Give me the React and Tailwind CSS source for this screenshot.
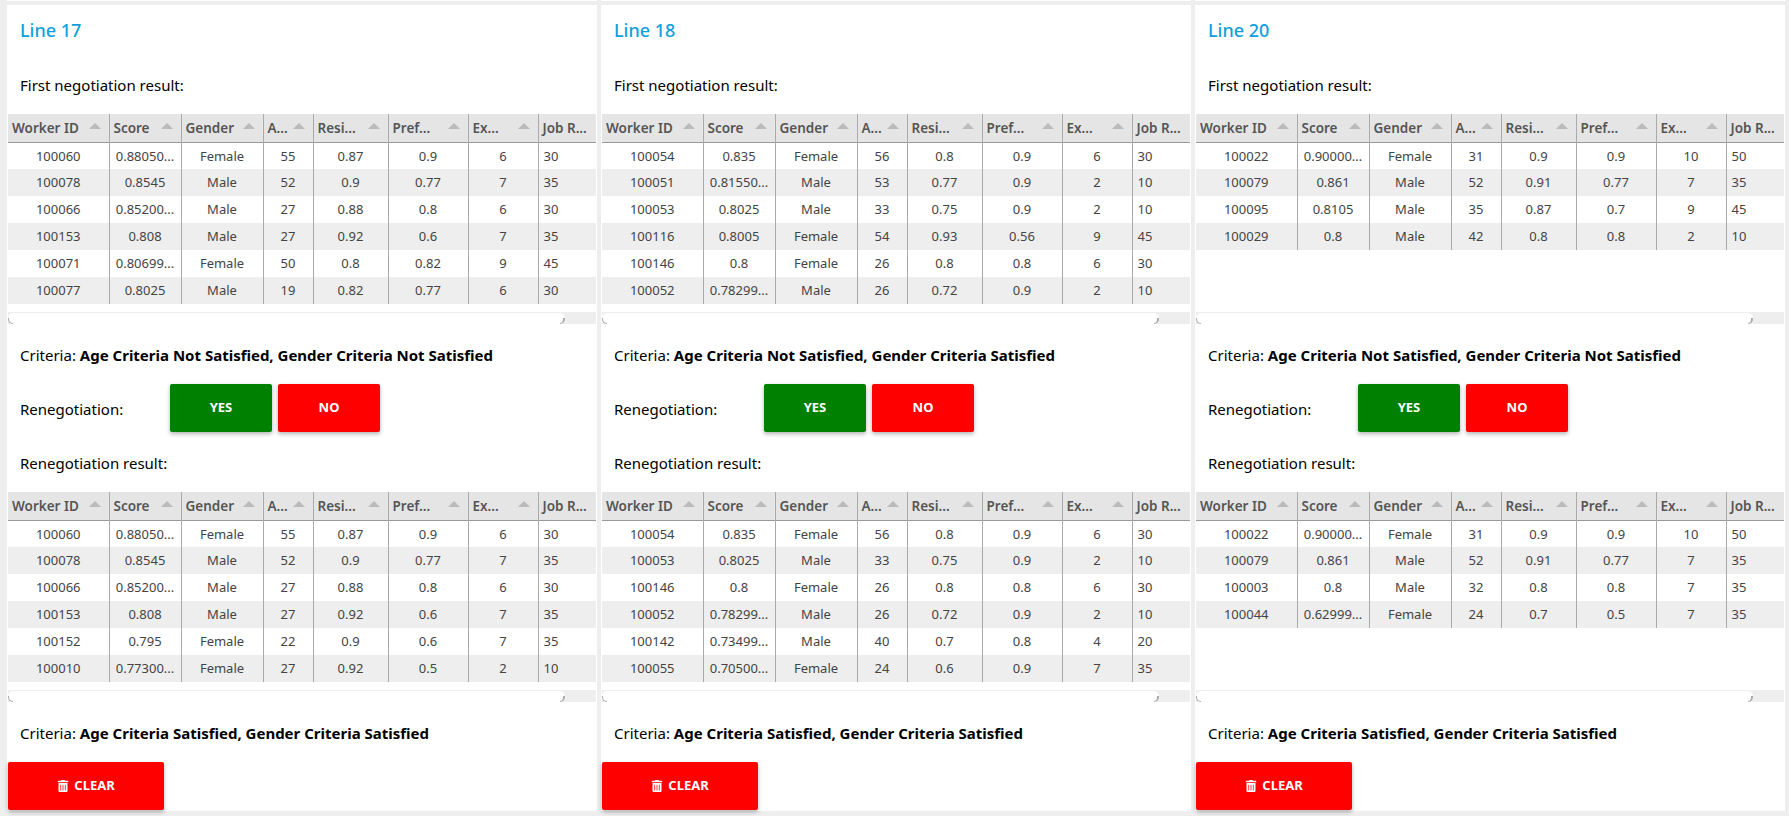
import React from 'react'
import { FaTrashAlt } from 'react-icons/fa'

const cols = [101, 72, 82, 50, 75, 80, 70, 71]
const heads = ['Worker ID', 'Score', 'Gender', 'A...', 'Resi...', 'Pref...', 'Ex...', 'Job R...']

const panels = [
  {
    title: 'Line 17',
    firstCriteria: 'Age Criteria Not Satisfied, Gender Criteria Not Satisfied',
    first: [
      ['100060', '0.88050...', 'Female', '55', '0.87', '0.9', '6', '30'],
      ['100078', '0.8545', 'Male', '52', '0.9', '0.77', '7', '35'],
      ['100066', '0.85200...', 'Male', '27', '0.88', '0.8', '6', '30'],
      ['100153', '0.808', 'Male', '27', '0.92', '0.6', '7', '35'],
      ['100071', '0.80699...', 'Female', '50', '0.8', '0.82', '9', '45'],
      ['100077', '0.8025', 'Male', '19', '0.82', '0.77', '6', '30'],
    ],
    second: [
      ['100060', '0.88050...', 'Female', '55', '0.87', '0.9', '6', '30'],
      ['100078', '0.8545', 'Male', '52', '0.9', '0.77', '7', '35'],
      ['100066', '0.85200...', 'Male', '27', '0.88', '0.8', '6', '30'],
      ['100153', '0.808', 'Male', '27', '0.92', '0.6', '7', '35'],
      ['100152', '0.795', 'Female', '22', '0.9', '0.6', '7', '35'],
      ['100010', '0.77300...', 'Female', '27', '0.92', '0.5', '2', '10'],
    ],
  },
  {
    title: 'Line 18',
    firstCriteria: 'Age Criteria Not Satisfied, Gender Criteria Satisfied',
    first: [
      ['100054', '0.835', 'Female', '56', '0.8', '0.9', '6', '30'],
      ['100051', '0.81550...', 'Male', '53', '0.77', '0.9', '2', '10'],
      ['100053', '0.8025', 'Male', '33', '0.75', '0.9', '2', '10'],
      ['100116', '0.8005', 'Female', '54', '0.93', '0.56', '9', '45'],
      ['100146', '0.8', 'Female', '26', '0.8', '0.8', '6', '30'],
      ['100052', '0.78299...', 'Male', '26', '0.72', '0.9', '2', '10'],
    ],
    second: [
      ['100054', '0.835', 'Female', '56', '0.8', '0.9', '6', '30'],
      ['100053', '0.8025', 'Male', '33', '0.75', '0.9', '2', '10'],
      ['100146', '0.8', 'Female', '26', '0.8', '0.8', '6', '30'],
      ['100052', '0.78299...', 'Male', '26', '0.72', '0.9', '2', '10'],
      ['100142', '0.73499...', 'Male', '40', '0.7', '0.8', '4', '20'],
      ['100055', '0.70500...', 'Female', '24', '0.6', '0.9', '7', '35'],
    ],
  },
  {
    title: 'Line 20',
    firstCriteria: 'Age Criteria Not Satisfied, Gender Criteria Not Satisfied',
    first: [
      ['100022', '0.90000...', 'Female', '31', '0.9', '0.9', '10', '50'],
      ['100079', '0.861', 'Male', '52', '0.91', '0.77', '7', '35'],
      ['100095', '0.8105', 'Male', '35', '0.87', '0.7', '9', '45'],
      ['100029', '0.8', 'Male', '42', '0.8', '0.8', '2', '10'],
    ],
    second: [
      ['100022', '0.90000...', 'Female', '31', '0.9', '0.9', '10', '50'],
      ['100079', '0.861', 'Male', '52', '0.91', '0.77', '7', '35'],
      ['100003', '0.8', 'Male', '32', '0.8', '0.8', '7', '35'],
      ['100044', '0.62999...', 'Female', '24', '0.7', '0.5', '7', '35'],
    ],
  },
]

const DataTable = ({ rows }) => (
  <div className="h-[210px] flex flex-col">
    <div className="h-[190px] overflow-hidden">
      <table className="table-fixed border-collapse w-[601px] text-[13px] text-[#444]">
        <colgroup>
          {cols.map((w, i) => <col key={i} style={{ width: w }} />)}
        </colgroup>
        <thead>
          <tr className="h-[28px] bg-[#e5e5e5] border-b border-[#999]">
            {heads.map((h, i) => (
              <th key={i} className={`p-0 font-semibold text-[13.5px] text-left text-[#555] ${i < 7 ? 'border-r border-[#aaa]' : ''}`}>
                <div className="flex items-center justify-between pl-[4px] pr-[8px] pt-[1px]">
                  <span className="whitespace-nowrap">{h}</span>
                  {i < 7 && <span className="mb-[4px] w-0 h-0 border-x-[6px] border-x-transparent border-b-[6px] border-b-[#bbb]" />}
                </div>
              </th>
            ))}
          </tr>
        </thead>
        <tbody>
          {rows.map((row, r) => (
            <tr key={r} className={`h-[27px] ${r % 2 ? 'bg-[#eeeeee]' : 'bg-white'}`}>
              {row.map((c, i) => (
                <td key={i} className={`p-0 pt-[1px] whitespace-nowrap ${i < 7 ? 'border-r border-[#aaa] text-center' : 'pl-[5px] text-left'}`}>{c}</td>
              ))}
            </tr>
          ))}
        </tbody>
      </table>
    </div>
    <div className="mt-auto h-[12px] bg-[#eeeeee]">
      <div className="relative h-full w-[557px] bg-white rounded-[6px] border-t border-[#eeeeee]">
        {/* the thumb only shows its shadow at the two rounded ends */}
        <span className="absolute left-0 bottom-0 w-[5px] h-[6px] border-l border-b border-[#aaa] rounded-bl-[6px]" />
        <span className="absolute right-0 bottom-0 w-[5px] h-[6px] border-r-2 border-b border-[#aaa] rounded-br-[6px]" />
      </div>
    </div>
  </div>
)

const Panel = ({ panel }) => (
  <div className="w-[590px] flex flex-col">
    <div className="h-[1px] mb-[4px] bg-white" />
    <div className="h-[806px] bg-white px-[1px] flex flex-col">
      <div className="h-[50px] pl-[12px] flex items-center text-[18px] leading-none font-medium text-[#0f9fdc]">{panel.title}</div>
      <div className="h-[59px] pt-[2px] pl-[12px] flex items-center text-[15px] text-black">First negotiation result:</div>
      <DataTable rows={panel.first} />
      <div className="h-[60px] pt-[3px] pl-[12px] flex items-center text-[15px] text-black">
        <span>Criteria:&nbsp;<b className="font-bold">{panel.firstCriteria}</b></span>
      </div>
      <div className="h-[48px] flex items-start pl-[12px]">
        <span className="w-[150px] self-end pb-[5px] text-[15px] leading-[36px] text-black">Renegotiation:</span>
        <div className="flex gap-[6px] text-[13px] font-bold text-white">
          <button className="w-[102px] h-[48px] rounded-[2px] bg-[#008000] shadow-[0_2px_4px_rgba(0,0,0,0.3)]">YES</button>
          <button className="w-[102px] h-[48px] rounded-[2px] bg-[#ff0000] shadow-[0_2px_4px_rgba(0,0,0,0.3)]">NO</button>
        </div>
      </div>
      <div className="h-[60px] pt-[3px] pl-[12px] flex items-center text-[15px] text-black">Renegotiation result:</div>
      <DataTable rows={panel.second} />
      <div className="h-[60px] pt-[3px] pl-[12px] flex items-center text-[15px] text-black">
        <span>Criteria:&nbsp;<b className="font-bold">Age Criteria Satisfied, Gender Criteria Satisfied</b></span>
      </div>
      <button className="w-[156px] h-[48px] rounded-[2px] bg-[#ff0000] text-white text-[13px] font-bold flex items-center justify-center gap-[5px] shadow-[0_2px_4px_rgba(0,0,0,0.3)]">
        <FaTrashAlt className="text-[12px]" />
        CLEAR
      </button>
    </div>
  </div>
)

export default function App() {
  return (
    <div className="h-[816px] w-[1789px] overflow-hidden bg-[#eeeeee] pl-[7px] flex gap-[4px] font-['Noto_Sans',sans-serif]">
      {panels.map((p) => <Panel key={p.title} panel={p} />)}
    </div>
  )
}
